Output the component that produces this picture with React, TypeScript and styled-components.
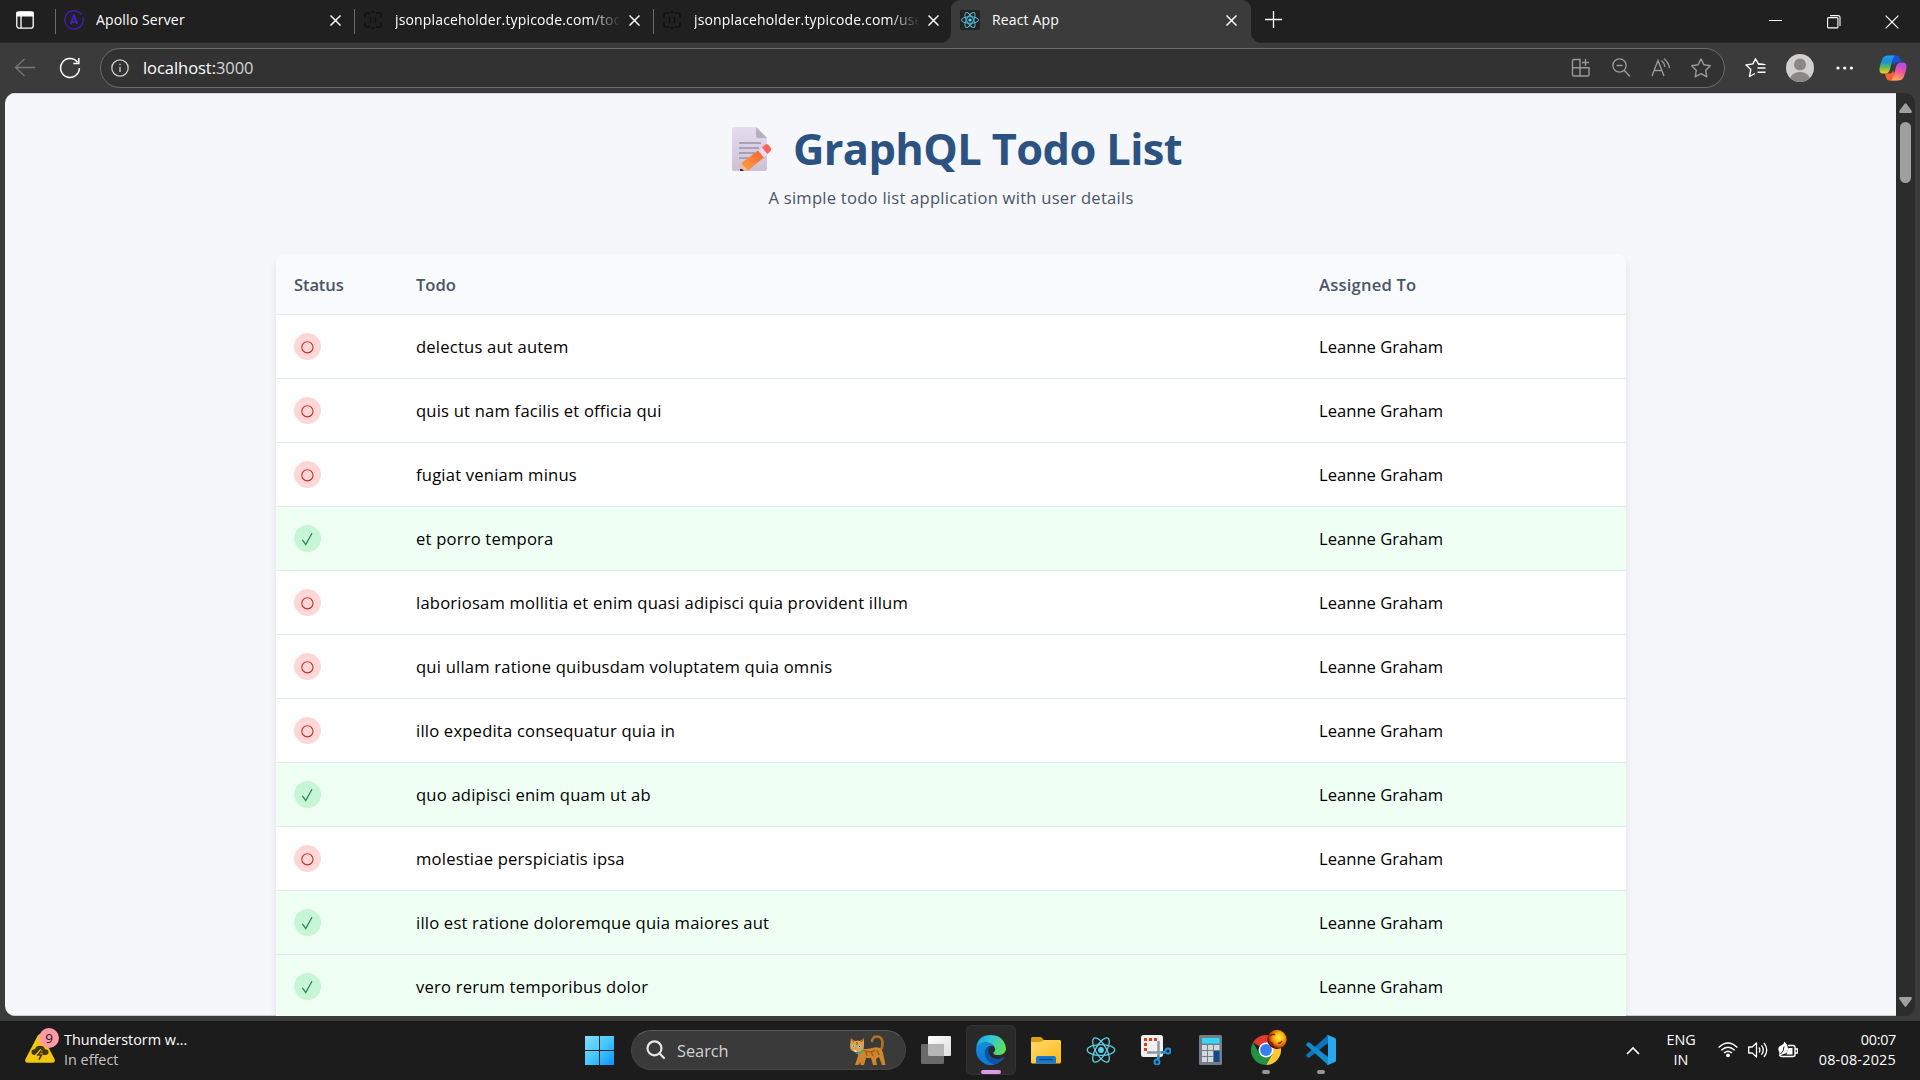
import React from 'react';
import styled, { createGlobalStyle, css } from 'styled-components';

const Global = createGlobalStyle`
  *, *::before, *::after { box-sizing: border-box; }
  html, body { margin: 0; padding: 0; background: #1c1c1c; overflow: hidden; }
  body { font-family: "Open Sans", "Noto Sans", sans-serif; }
  svg { display: block; flex: none; }
`;

const Screen = styled.div`
  width: 1920px;
  height: 1080px;
  display: flex;
  flex-direction: column;
  overflow: hidden;
  background: #3b3b3b;
`;

/* ---------- tab strip ---------- */
const TitleBar = styled.header`
  height: 43px;
  flex: none;
  display: flex;
  align-items: stretch;
  background: #202020;
  box-shadow: inset 0 -1px 0 #2b2b2b;
  color: #fff;
`;
const WorkspaceButton = styled.div`
  width: 55px;
  padding: 11px 0 0 16px;
`;
const Tab = styled.div<{ $active?: boolean }>`
  position: relative;
  width: 299px;
  display: flex;
  align-items: center;
  padding: 0 0 3px 9px;
  font-size: 14px;
  letter-spacing: 0.15px;
  ${(p) =>
    p.$active
      ? css`
          width: 300px;
          margin-left: -1px;
          background: #3b3b3b;
          border-radius: 9px 9px 0 0;
          &::before,
          &::after {
            content: '';
            position: absolute;
            bottom: 0;
            width: 10px;
            height: 10px;
          }
          &::before {
            left: -10px;
            background: radial-gradient(circle at 0 0, #202020 9.5px, #3b3b3b 10px);
          }
          &::after {
            right: -10px;
            background: radial-gradient(circle at 100% 0, #202020 9.5px, #3b3b3b 10px);
          }
        `
      : css`
          &::before {
            content: '';
            position: absolute;
            left: 0;
            top: 9px;
            width: 1px;
            height: 25px;
            background: #6b6b6b;
          }
        `}
`;
const TabTitle = styled.span<{ $fade?: boolean }>`
  width: 225px;
  margin-left: 12px;
  line-height: 20px;
  white-space: nowrap;
  overflow: hidden;
  ${(p) => p.$fade && css`mask-image: linear-gradient(90deg, #000 195px, transparent 226px);`}
`;
const TabClose = styled.span`
  margin: 1px 0 0 9px;
`;
const NewTab = styled.div`
  padding: 11px 0 0 14px;
  flex: 1;
`;
const WindowControls = styled.div`
  display: flex;
  gap: 44px;
  padding: 15px 21px 0 0;
`;

/* ---------- toolbar ---------- */
const Toolbar = styled.div`
  height: 50px;
  flex: none;
  display: flex;
  align-items: center;
  padding: 0 13px 0 14px;
  background: #3b3b3b;
`;
const NavButton = styled.div`
  width: 22px;
  margin-right: 23px;
`;
const AddressBar = styled.div`
  width: 1625px;
  height: 40px;
  margin-left: -4px;
  display: flex;
  align-items: center;
  padding: 0 12px 0 10px;
  border: 1px solid #6c6c6c;
  border-radius: 20px;
  background: #323232;
`;
const Url = styled.span`
  flex: 1;
  margin-left: 14px;
  font-size: 16.5px;
  letter-spacing: -0.05px;
  line-height: 24px;
  color: #fff;
`;
const Port = styled.span`
  color: #d5d5d5;
`;
const AddressActions = styled.div`
  display: flex;
  gap: 18px;
`;
const ToolbarActions = styled.div`
  flex: 1;
  display: flex;
  align-items: center;
  padding-left: 20px;
`;
const ToolbarItem = styled.div<{ $gap: number }>`
  margin-right: ${(p) => p.$gap}px;
`;

/* ---------- page ---------- */
const Viewport = styled.div`
  height: 923px;
  flex: none;
  margin: 0 5px;
  display: flex;
  overflow: hidden;
  border-radius: 10px;
  background: #2c2c2c;
`;
const Page = styled.main`
  width: 1891px;
  background: #f5f7fb;
  overflow: hidden;
  box-shadow: inset 0 1px 0 #dcdde1, inset 0 -1px 0 #cfd0d4;
`;
const PageHeader = styled.div`
  height: 161px;
  display: flex;
  flex-direction: column;
  align-items: center;
  padding: 26px 0 0 13px;
`;
const Title = styled.h1`
  display: flex;
  align-items: center;
  gap: 21px;
  height: 60px;
  margin: 0;
  font-size: 43.4px;
  font-weight: 700;
  letter-spacing: -0.6px;
  line-height: 60px;
  color: #2c5282;
`;
const Subtitle = styled.p`
  margin: 6px 0 0;
  padding-right: 12px;
  font-size: 16.6px;
  letter-spacing: 0.24px;
  line-height: 26px;
  color: #4a5568;
`;
const Card = styled.section`
  border-radius: 9px 9px 0 0;
  overflow: hidden;
  background: #fff;
`;
const CardShadow = styled.div`
  width: 1350px;
  height: 900px;
  border-radius: 9px;
  box-shadow: 0 4px 7px rgba(0, 0, 0, 0.1);
  margin-left: 271px;
`;
const Row = styled.div<{ $head?: boolean; $done?: boolean }>`
  display: grid;
  grid-template-columns: 122px 903px 1fr;
  align-items: center;
  height: ${(p) => (p.$head ? 61 : 64)}px;
  padding-left: 18px;
  padding-top: ${(p) => (p.$head ? 2 : 0)}px;
  border-bottom: 1px solid #e2e8f0;
  background: ${(p) => (p.$head ? '#f8fafc' : p.$done ? '#f0fff4' : '#fff')};
  font-size: 16.6px;
  font-weight: ${(p) => (p.$head ? 600 : 400)};
  color: ${(p) => (p.$head ? '#4a5568' : '#000')};
`;
const Cell = styled.span<{ $ls?: number }>`
  line-height: 26px;
  white-space: nowrap;
  letter-spacing: ${(p) => p.$ls ?? 0}px;
`;
const StatusBadge = styled.span<{ $done: boolean }>`
  width: 27px;
  height: 27px;
  border-radius: 50%;
  background: ${(p) => (p.$done ? '#c6f6d5' : '#fed7d7')};
  color: ${(p) => (p.$done ? '#2f855a' : '#c53030')};
`;
const ScrollTrack = styled.div`
  flex: 1;
  display: flex;
  flex-direction: column;
  align-items: center;
  padding: 10px 0 9px;
`;
const ScrollThumb = styled.div`
  width: 11px;
  height: 61px;
  margin: 9px 0 auto;
  border-radius: 6px;
  background: #9f9f9f;
`;

/* ---------- taskbar ---------- */
const Taskbar = styled.footer`
  height: 59px;
  margin-top: 5px;
  flex: none;
  display: flex;
  align-items: flex-start;
  padding-top: 4px;
  background: #1c1c1c;
  color: #fff;
`;
const Weather = styled.div`
  width: 574px;
  display: flex;
  padding-left: 25px;
`;
const WeatherIcon = styled.div`
  position: relative;
  width: 30px;
  margin-right: 9px;
  padding-top: 9px;
`;
const AlertCount = styled.span`
  position: absolute;
  left: 14px;
  top: 3px;
  width: 20px;
  height: 20px;
  border-radius: 50%;
  background: #ff99a4;
  color: #1a1a1a;
  font-size: 13.500px;
  line-height: 20px;
  text-align: center;
`;
const SmallText = styled.div<{ $align?: string; $ls?: number; $muted?: boolean }>`
  font-size: 14.4px;
  line-height: 20px;
  white-space: nowrap;
  text-align: ${(p) => p.$align ?? 'left'};
  letter-spacing: ${(p) => p.$ls ?? 0}px;
  color: ${(p) => (p.$muted ? '#c4c4c4' : '#fff')};
`;
const Stack = styled.div<{ $w?: number; $mr?: number }>`
  display: flex;
  flex-direction: column;
  width: ${(p) => (p.$w ? p.$w + 'px' : 'auto')};
  margin-right: ${(p) => p.$mr ?? 0}px;
  padding-top: 5px;
`;
const Apps = styled.div`
  display: flex;
  align-items: center;
  gap: 5px;
  height: 50px;
`;
const Slot = styled.div<{ $current?: boolean; $running?: boolean }>`
  position: relative;
  width: 50px;
  height: 50px;
  display: grid;
  place-items: center;
  border-radius: 6px;
  ${(p) => p.$current && css`background: #292929; box-shadow: inset 0 0 0 1px #333;`}
  &::after {
    content: '';
    display: ${(p) => (p.$current || p.$running ? 'block' : 'none')};
    position: absolute;
    bottom: 1px;
    left: ${(p) => (p.$current ? 15 : 21)}px;
    width: ${(p) => (p.$current ? 20 : 8)}px;
    height: 4px;
    border-radius: 2px;
    background: ${(p) => (p.$current ? '#dc9be4' : '#969696')};
  }
`;
const SearchPill = styled.div`
  width: 275px;
  height: 40px;
  margin-left: 2px;
  display: flex;
  align-items: center;
  padding: 0 18px 0 14px;
  border: 1px solid #454545;
  border-top-color: #5b5b5b;
  border-radius: 20px;
  background: #3a3a3a;
  color: #d2d2d2;
  font-size: 16.4px;
  letter-spacing: -0.05px;
`;
const SearchLabel = styled.span`
  flex: 1;
  margin: 1px 0 0 11px;
  line-height: 24px;
`;
const Tray = styled.div`
  margin-left: auto;
  display: flex;
  padding-right: 24px;
`;
const TrayIcon = styled.div<{ $w: number; $mr: number }>`
  width: ${(p) => p.$w}px;
  height: 50px;
  margin-right: ${(p) => p.$mr}px;
  display: grid;
  place-items: center;
`;

/* ---------- drawings ---------- */
const Cross = ({ s = 11, w = 1.5 }: { s?: number; w?: number }) => (
  <svg width={s} height={s} viewBox="0 0 11 11" stroke="#fff" strokeWidth={w}><path d="M.5.5l10 10M10.5.5l-10 10" /></svg>
);
const ReactAtom = ({ s, c = '#61dafb', w = 1.2 }: { s: number; c?: string; w?: number }) => (
  <svg width={s} height={s} viewBox="-14 -14 28 28" fill="none" stroke={c} strokeWidth={w}>
    <circle r="2.7" fill={c} stroke="none" />
    <ellipse rx="12.8" ry="5" /><ellipse rx="12.8" ry="5" transform="rotate(60)" /><ellipse rx="12.8" ry="5" transform="rotate(120)" />
  </svg>
);
const ApolloMark = () => (
  <svg width="20" height="20" viewBox="0 0 20 20" fill="none" stroke="#3f20ba">
    <path d="M16.7 3.6A9.2 9.2 0 1 0 18.7 7" strokeWidth="1.3" /><circle cx="17" cy="3.8" r="1" fill="#3f20ba" stroke="none" />
    <path d="M6.6 14 10 5.7l3.4 8.3M7.8 12h3.6" strokeWidth="2" />
  </svg>
);
const BracesMark = () => (
  <svg width="20" height="20" viewBox="0 0 20 20" fill="none" stroke="#111" strokeWidth="1.5">
    <path d="M2 8V5q0-2 2-2h3M13 3h3q2 0 2 2v3M2 12v3q0 2 2 2h3M13 17h3q2 0 2-2v-3M8.5 2h3M8.5 18h3" /><path d="M7.5 7v6M12.5 7v6" />
  </svg>
);
const ReactTabIcon = () => (
  <svg width="20" height="20" viewBox="-10 -10 20 20" fill="none" stroke="#53bcd8" strokeWidth="1">
    <rect x="-10" y="-10" width="20" height="20" rx="2" fill="#222" stroke="none" />
    <circle r="1.6" fill="#61dafb" stroke="none" />
    <ellipse rx="8.5" ry="3.3" /><ellipse rx="8.5" ry="3.3" transform="rotate(60)" /><ellipse rx="8.5" ry="3.3" transform="rotate(120)" />
  </svg>
);
const MemoIcon = () => (
  <svg width="40" height="44" viewBox="0 0 40 44">
    <defs>
      <linearGradient id="paper" x1="0" y1="0" x2="0" y2="1"><stop stopColor="#e4dded" /><stop offset="1" stopColor="#cdc0d6" /></linearGradient>
      <linearGradient id="pencil" x1="0" y1="1" x2="1" y2="0"><stop stopColor="#ffa248" /><stop offset="1" stopColor="#f3602c" /></linearGradient>
    </defs>
    <path d="M2 0h22l11 11v31q0 2-2 2H2q-2 0-2-2V2q0-2 2-2z" fill="url(#paper)" />
    <path d="M24 0l11 11h-9q-2 0-2-2z" fill="#b9aec1" />
    <path d="M7 16h22M7 21h20M7 26h16M7 31h9" stroke="#9a93a3" strokeWidth="1.6" />
    <path d="M8 44v-3l1.5-5L28 22l6 7-18 14.5z" fill="url(#pencil)" />
    <path d="M9.5 36.5l6.500 7H8v-3z" fill="#eac0a2" /><path d="M8 42h2l2 2H8z" fill="#352050" />
    <path d="M26 23.5l4-3 6 7-4 3z" fill="#e8d9f4" />
    <path d="M30 20.5l3.5-3q1.500-1 3 .6l2.500 3q1 1.800-.5 3l-3 2.900z" fill="#ff6257" />
  </svg>
);
const Copilot = () => (
  <svg width="28" height="26" viewBox="0 0 28 26">
    <defs>
      <linearGradient id="cpA" x1="0" y1="0" x2="0" y2="1"><stop stopColor="#1b9df0" /><stop offset=".35" stopColor="#1c8fd8" /><stop offset=".65" stopColor="#5cba61" /><stop offset="1" stopColor="#ffd20a" /></linearGradient>
      <linearGradient id="cpB" x1=".7" y1="0" x2=".4" y2="1"><stop stopColor="#a54cf0" /><stop offset=".5" stopColor="#f0559a" /><stop offset="1" stopColor="#ffae55" /></linearGradient>
    </defs>
    <path d="M10 .5h8q2 0 3 3L22 7h-4q-2 0-3 3z" fill="#1a4fdc" />
    <path d="M18 25.5h-8q-2 0-3-3L6 18.5h5q2 0 3-3z" fill="#f9603a" />
    <path d="M9 .5h7.5q-2 .5-3 4L11 14q-1 4.500-5 4.500H4Q0 18.500.5 13.500 1 9 3.5 3.500 5 .5 9 .5z" fill="url(#cpA)" />
    <path d="M19 25.5h-7.500q2-.5 3-4L17 12q1-4.500 5-4.500h2q4 0 3.500 5-.5 4.500-3 10-1.500 3-5.500 3z" fill="url(#cpB)" />
  </svg>
);
const WindowsLogo = () => (
  <svg width="29" height="29" viewBox="0 0 29 29">
    <defs><linearGradient id="win" gradientUnits="userSpaceOnUse" x1="0" y1="0" x2="29" y2="29"><stop stopColor="#85dcff" /><stop offset=".5" stopColor="#45c8fd" /><stop offset="1" stopColor="#0b93fb" /></linearGradient></defs>
    <path d="M0 0h14v14H0zM15 0h14v14H15zM0 15h14v14H0zM15 15h14v14H15z" fill="url(#win)" />
  </svg>
);
const Cat = () => (
  <svg width="38" height="32" viewBox="0 0 38 32">
    <path d="M31 17q3-4 2.500-9-1-6-6-5.500-4 .5-4.500 4.500" fill="none" stroke="#b8701e" strokeWidth="2.600" strokeLinecap="round" />
    <path d="M10 14q8 2 15-.5 7-1 9 5l2.500 12.500H33l-3-8-3 2 1 6h-4l-2-7h-5l-2 7h-3.500v-3L9.500 31H6l3-9q-1-4 1-8z" fill="#ce852c" />
    <path d="M14 16q8 4 12 0M17 18l1 4M22 18l2 4M28 16l2 5" fill="none" stroke="#9c5717" strokeWidth="1.2" />
    <path d="M2 4l4 3q3-1 5 0l4-3v8q0 6-7 6t-7-6z" fill="#dda04a" />
    <path d="M2 4l3 4M15 4l-3 4M8 8v3" stroke="#9c5717" strokeWidth="1.2" />
    <circle cx="4.5" cy="12" r="1.5" fill="#9be5ec" /><circle cx="10.5" cy="12.5" r="1.5" fill="#8ae0e8" /><circle cx="4.5" cy="12" r=".6" /><circle cx="10.5" cy="12.5" r=".6" />
    <path d="M5 16l3 1-1.5 1.5z" fill="#fff" /><path d="M7 19q5 1 7-3" fill="none" stroke="#28a89a" strokeWidth="1.6" />
  </svg>
);
const TaskView = () => (
  <svg width="30" height="28" viewBox="0 0 30 28">
    <defs><linearGradient id="tv" x2="1" y2="1"><stop stopColor="#fff" /><stop offset="1" stopColor="#dedede" /></linearGradient></defs>
    <rect x="7" width="23" height="20" rx="1" fill="url(#tv)" /><rect y="8" width="23" height="20" rx="1" fill="#6a6a6a" /><path d="M7 8h16v12H8q-1 0-1-1z" fill="#b5b5b5" />
  </svg>
);
const Edge = () => (
  <svg width="30" height="30" viewBox="0 0 30 30">
    <defs>
      <linearGradient id="edTop" x1="0" y1=".3" x2="1" y2=".6"><stop stopColor="#1ba2e6" /><stop offset=".45" stopColor="#32c6d8" /><stop offset="1" stopColor="#62e04e" /></linearGradient>
      <linearGradient id="edL" x1=".2" y1="0" x2=".5" y2="1"><stop stopColor="#168fd8" /><stop offset="1" stopColor="#0b79dc" /></linearGradient>
      <linearGradient id="edB" x1="0" y1="0" x2="1" y2="1"><stop stopColor="#0f4f9d" /><stop offset="1" stopColor="#1456aa" /></linearGradient>
    </defs>
    <path d="M.3 13Q1.5 0 15 0 24 0 28 7q3 5.5 1.5 9-2 4.5-7.500 4-5 0-4.500-2.500 2-1.500 1.500-4Q17.500 8.500 11 7.500 4 7 .3 13z" fill="url(#edTop)" />
    <path d="M0 15Q.5 8 8 7.5q7-.5 10 3.500-7-1.500-8 5-.5 8 6 11.500 3 1.500 3 1.800Q12 32 5.500 26.500 0 22 0 15z" fill="url(#edL)" />
    <path d="M12.500 11.500q-4 2-3.800 6.500.3 6.500 6 10 5 3 10-1.500 2.500-2 3.300-3.800-.5-.7-1.500 0Q17 26.500 13 18.500q-1.500-4 1.500-6.500z" fill="url(#edB)" />
  </svg>
);
const Folder = () => (
  <svg width="30" height="27" viewBox="0 0 30 27">
    <defs><linearGradient id="fd" x2="1" y2="1"><stop stopColor="#ffdb70" /><stop offset="1" stopColor="#ffb914" /></linearGradient></defs>
    <path d="M1.5 0H10l3 3h15q2 0 2 2v4H0V1.500Q0 0 1.500 0z" fill="#dda00c" />
    <path d="M0 5h10l3-2h15.500Q30 3 30 5v20q0 1.500-1.500 1.500h-27Q0 26.500 0 25z" fill="url(#fd)" />
    <path d="M5 26.500V21q0-2 2-2h16q2 0 2 2v5.500z" fill="#1678cf" /><path d="M9 22.500h12" stroke="#0a4a94" strokeWidth="1.3" strokeLinecap="round" />
  </svg>
);
const Snip = () => (
  <svg width="30" height="30" viewBox="0 0 30 30" fill="none">
    <rect width="22" height="22" rx="2.5" fill="#f0f0f0" />
    <path d="M16 4.500H4.500V17" stroke="#dc3c10" strokeWidth="3" strokeDasharray="3 2" />
    <path d="M17.500 6v18M6 17.500h18" stroke="#8e979f" strokeWidth="2.5" />
    <circle cx="27" cy="16" r="2.5" stroke="#1c94e0" strokeWidth="2" /><circle cx="16" cy="27" r="2.5" stroke="#1c94e0" strokeWidth="2" />
    <path d="M20 17.500l5-1M17.500 20l-1 5" stroke="#1c94e0" strokeWidth="2" />
  </svg>
);
const Calculator = () => (
  <svg width="24" height="30" viewBox="0 0 24 30">
    <rect width="23" height="30" rx="1.5" fill="#747e89" /><rect x="3" y="3" width="17.5" height="5.5" fill="#38d6fb" />
    <path d="M3 10h5v5H3zM9 10h5v5H9zM15 10h5.500v5H15zM3 16h5v5H3zM9 16h5v5H9zM3 22h5v5H3zM9 22h5v5H9z" fill="#d3d8df" /><path d="M15 16h5.500v11H15z" fill="#10498f" />
  </svg>
);
const Chrome = () => (
  <svg width="42" height="42" viewBox="-21 -21 42 42">
    <defs><radialGradient id="fire" cx=".6" cy=".4" r=".58"><stop stopColor="#fff04a" /><stop offset=".45" stopColor="#f9b010" /><stop offset=".8" stopColor="#cf5208" /><stop offset="1" stopColor="#541504" /></radialGradient></defs>
    <path d="M0 0L-13 -7.5A15 15 0 0 1 13 -7.5z" fill="#e33b2e" />
    <path d="M0 0L0 -7.5H13A15 15 0 0 1 0 15L6.500 3.700z" fill="#fcc934" />
    <path d="M-6.500 3.700L-13 -7.5A15 15 0 0 0 0 15L6.500 3.700z" fill="#229342" />
    <circle r="7.5" fill="#fff" /><circle r="5.9" fill="#377ff0" />
    <circle cx="11" cy="-10.5" r="9.7" fill="url(#fire)" />
    <path d="M3 -8q3 0 4 3t4 2M4 -14q3-3 5-1M12 -7q2 1 4-2" stroke="#7d1c05" strokeWidth="1.3" fill="none" />
  </svg>
);
const VsCode = () => (
  <svg width="30" height="30" viewBox="0 0 30 30">
    <path d="M22 0v8L3.500 22.500q-.8.6-1.600 0L.5 21.200q-.8-.9 0-1.700z" fill="#0a75bd" />
    <path d="M22 30v-8L3.500 7.500q-.8-.6-1.600 0L.5 8.800q-.8.9 0 1.700z" fill="#128acb" />
    <path d="M22 0l7 3q1 .6 1 1.500v21q0 1-1 1.500l-7 3q-.8.2-1.500-.5 1.500.5 1.500-1.500V2q0-2-1.500-1.500.7-.7 1.500-.5z" fill="#29a8f2" />
  </svg>
);

const StatusGlyph = ({ done }: { done: boolean }) => (
  <svg width="27" height="27" viewBox="0 0 27 27" fill="none" stroke="currentColor">
    {done ? <path d="M8.3 14.8l3.500 4.700L18 8.200" strokeWidth="1.3" /> : <circle cx="13.4" cy="14.3" r="5.6" strokeWidth="1.1" />}
  </svg>
);

const todos: { title: string; done: boolean }[] = [
  { title: 'delectus aut autem', done: false },
  { title: 'quis ut nam facilis et officia qui', done: false },
  { title: 'fugiat veniam minus', done: false },
  { title: 'et porro tempora', done: true },
  { title: 'laboriosam mollitia et enim quasi adipisci quia provident illum', done: false },
  { title: 'qui ullam ratione quibusdam voluptatem quia omnis', done: false },
  { title: 'illo expedita consequatur quia in', done: false },
  { title: 'quo adipisci enim quam ut ab', done: true },
  { title: 'molestiae perspiciatis ipsa', done: false },
  { title: 'illo est ratione doloremque quia maiores aut', done: true },
  { title: 'vero rerum temporibus dolor', done: true },
];

const tabs = [
  { title: 'Apollo Server', icon: <ApolloMark /> },
  { title: 'jsonplaceholder.typicode.com/todos', icon: <BracesMark />, fade: true },
  { title: 'jsonplaceholder.typicode.com/users', icon: <BracesMark />, fade: true },
  { title: 'React App', icon: <ReactTabIcon />, active: true },
];

export default function App() {
  return (
    <Screen>
      <Global />
      <TitleBar>
        <WorkspaceButton>
          <svg width="18" height="18" viewBox="0 0 18 18" fill="none" stroke="#fff" strokeWidth="1.3"><rect x=".8" y=".8" width="16.4" height="16.4" rx="2.5" /><path d="M1 1.500h16v3.300H1z" fill="#fff" /><path d="M5 5v12" /></svg>
        </WorkspaceButton>
        {tabs.map((t, i) => (
          <Tab key={i} $active={t.active}>
            {t.icon}
            <TabTitle $fade={t.fade}>{t.title}</TabTitle>
            <TabClose><Cross /></TabClose>
          </Tab>
        ))}
        <NewTab><svg width="17" height="17" viewBox="0 0 17 17" stroke="#fff" strokeWidth="1.3"><path d="M8.500 0v17M0 8.500h17" /></svg></NewTab>
        <WindowControls>
          <svg width="14" height="14" viewBox="0 0 14 14" stroke="#fff"><path d="M0 5.500h13" /></svg>
          <svg width="14" height="14" viewBox="0 0 14 14" fill="none" stroke="#fff" strokeWidth="1.1"><rect x=".6" y="2.6" width="10.3" height="10.3" rx="1" /><path d="M3 .6h8q2 0 2 2V11" /></svg>
          <Cross s={14} w={1} />
        </WindowControls>
      </TitleBar>

      <Toolbar>
        <NavButton><svg width="22" height="22" viewBox="0 0 22 22" fill="none" stroke="#777" strokeWidth="1.3"><path d="M21 10.500H1.500M10.500 2L1.500 10.500l9 8.500" /></svg></NavButton>
        <NavButton><svg width="22" height="22" viewBox="0 0 22 22" fill="none" stroke="#fff" strokeWidth="1.5"><path d="M20.400 11A9.400 9.400 0 1 1 18.500 5.300M19.800 1v5.500h-5.500" /></svg></NavButton>
        <AddressBar>
          <svg width="18" height="18" viewBox="0 0 18 18" fill="none" stroke="#d0d0d0" strokeWidth="1.3"><circle cx="9" cy="9" r="8.2" /><path d="M9 8v5M9 4.800v1.500" /></svg>
          <Url>localhost:<Port>3000</Port></Url>
          <AddressActions>
            <svg width="22" height="20" viewBox="0 0 22 20" fill="none" stroke="#999" strokeWidth="1.4"><path d="M2.500 10V3q0-1.500 1.500-1.500h6v16.500H4q-1.500 0-1.500-1.500V9.700h16.500v6.800q0 1.500-1.500 1.500H10M15.500 1v7M12 4.500h7" /></svg>
            <svg width="22" height="20" viewBox="0 0 22 20" fill="none" stroke="#999" strokeWidth="1.4"><circle cx="9.5" cy="7.5" r="6.6" /><path d="M14 12l6 6.500M6.500 7.500h6" /></svg>
            <svg width="22" height="20" viewBox="0 0 22 20" fill="none" stroke="#999" strokeWidth="1.4"><path d="M2 18L8 2.500 14 18M4 12.500h8M11.500 2.500q3 2.500 3.500 6.500M14 .8q5 4 5.500 9.500" /></svg>
            <svg width="22" height="20" viewBox="0 0 22 20" fill="none" stroke="#999" strokeWidth="1.4" strokeLinejoin="round"><path d="M11 .9l2.900 5.900 6.400.9-4.600 4.600 1.100 6.500L11 15.700l-5.800 3.100 1.100-6.500L1.700 7.700l6.400-.9z" /></svg>
          </AddressActions>
        </AddressBar>
        <ToolbarActions>
          <ToolbarItem $gap={20}>
            <svg width="21" height="20" viewBox="0 0 21 20" fill="none" stroke="#fff" strokeWidth="1.4" strokeLinejoin="round"><path d="M19 6.500l-5.800-.8L10.500.8 7.900 5.900 1 7l4.800 4.500-1.300 7 5.500-3M12.500 10H20.500M12.500 14.200H20.500" /><path d="M13 6.500h7.500" strokeWidth="1" /></svg>
          </ToolbarItem>
          <ToolbarItem $gap={22}>
            <svg width="28" height="28" viewBox="0 0 28 28"><defs><clipPath id="face"><circle cx="14" cy="14" r="14" /></clipPath></defs><g clipPath="url(#face)"><path d="M0 0h28v28H0z" fill="#d2d0ce" /><circle cx="14" cy="10.5" r="6" fill="#8a8886" /><ellipse cx="14" cy="26" rx="10" ry="8" fill="#8a8886" /></g></svg>
          </ToolbarItem>
          <ToolbarItem $gap={25}>
            <svg width="18" height="4" viewBox="0 0 18 4" fill="#fff"><circle cx="2" cy="2" r="1.6" /><circle cx="8.7" cy="2" r="1.6" /><circle cx="15.4" cy="2" r="1.6" /></svg>
          </ToolbarItem>
          <Copilot />
        </ToolbarActions>
      </Toolbar>

      <Viewport>
        <Page>
          <PageHeader>
            <Title><MemoIcon />GraphQL Todo List</Title>
            <Subtitle>A simple todo list application with user details</Subtitle>
          </PageHeader>
          <CardShadow>
            <Card>
              <Row $head><Cell $ls={-0.15}>Status</Cell><Cell>Todo</Cell><Cell $ls={0.2}>Assigned To</Cell></Row>
              {todos.map((t) => (
                <Row key={t.title} $done={t.done}>
                  <StatusBadge $done={t.done}><StatusGlyph done={t.done} /></StatusBadge>
                  <Cell $ls={0.2}>{t.title}</Cell>
                  <Cell>Leanne Graham</Cell>
                </Row>
              ))}
            </Card>
          </CardShadow>
        </Page>
        <ScrollTrack>
          <svg width="13" height="10" viewBox="0 0 13 10" fill="#9f9f9f"><path d="M5.500.8q1-1 2 0L12.700 8q.6 2-1 2H1.300q-1.600 0-1-2z" /></svg>
          <ScrollThumb />
          <svg width="13" height="10" viewBox="0 0 13 10" fill="#9f9f9f"><path d="M5.500 9.200q1 1 2 0L12.700 2q.6-2-1-2H1.300Q-.3 0 .3 2z" /></svg>
        </ScrollTrack>
      </Viewport>

      <Taskbar>
        <Weather>
          <WeatherIcon>
            <svg width="30" height="29" viewBox="0 0 30 29"><path d="M12.800 1.500q2.200-3 4.400 0L29.500 25q1.300 3.500-2 3.800h-25Q-.8 28.500.5 25z" fill="#f2c80f" /><path d="M9.500 21q-3 0-3-3t3.500-2.800q1-3.400 5-3.400t5 3.400q3.500 0 3.500 2.800t-3 3z" fill="#44360b" /><path d="M16.500 16l-4.500 5h4l-2 5" fill="none" stroke="#f2c80f" strokeWidth="3" /><path d="M16.500 16.500L13 21h3.500l-2.500 4.500" fill="none" stroke="#44360b" strokeWidth="1.6" /></svg>
            <AlertCount>9</AlertCount>
          </WeatherIcon>
          <Stack>
            <SmallText>Thunderstorm w...</SmallText>
            <SmallText $muted>In effect</SmallText>
          </Stack>
        </Weather>
        <Apps>
          <Slot><WindowsLogo /></Slot>
          <SearchPill>
            <svg width="20" height="20" viewBox="0 0 20 20" fill="none" stroke="#e4e6e8" strokeWidth="2.2" strokeLinecap="round"><circle cx="8.5" cy="8.3" r="7" /><path d="M13.600 13.500l4.400 4.500" /></svg>
            <SearchLabel>Search</SearchLabel>
            <Cat />
          </SearchPill>
          <Slot><TaskView /></Slot>
          <Slot $current><Edge /></Slot>
          <Slot><Folder /></Slot>
          <Slot><ReactAtom s={30} c="#5fcfe3" /></Slot>
          <Slot><Snip /></Slot>
          <Slot><Calculator /></Slot>
          <Slot $running><Chrome /></Slot>
          <Slot $running><VsCode /></Slot>
        </Apps>
        <Tray>
          <TrayIcon $w={14} $mr={26}><svg width="14" height="9" viewBox="0 0 14 9" fill="none" stroke="#fff" strokeWidth="1.7"><path d="M1 8l6-6 6 6" /></svg></TrayIcon>
          <Stack $w={30} $mr={22}><SmallText $align="center" $ls={-0.1}>ENG</SmallText><SmallText $align="center">IN</SmallText></Stack>
          <TrayIcon $w={20} $mr={10}>
            <svg width="20" height="16" viewBox="0 0 20 16" fill="none" stroke="#fff" strokeWidth="1.4"><path d="M.6 5.500q9.400-9 18.800 0M3.300 8.300q6.700-6.300 13.400 0M6 11q4-3.700 8 0" /><circle cx="10" cy="13.3" r="1.9" fill="#fff" stroke="none" /></svg>
          </TrayIcon>
          <TrayIcon $w={20} $mr={10}>
            <svg width="20" height="18" viewBox="0 0 20 18" fill="none" stroke="#fff" strokeWidth="1.3" strokeLinejoin="round"><path d="M.7 6h3.500L8.500 2v14L4.200 12H.7zM11 6.500q1.800 2.500 0 5M13.500 4.300q3.500 4.700 0 9.400M16 2q5.500 7 0 14" /></svg>
          </TrayIcon>
          <TrayIcon $w={20} $mr={18}>
            <svg width="20" height="18" viewBox="0 0 20 18" fill="none" stroke="#fff" strokeWidth="1.4"><path d="M10 4.500h5q2 0 2 2v7q0 2-2 2H4q-2 0-2-1.500M17 8h2.500v4H17" /><path d="M8.500 13.500h6V7h-4z" fill="#fff" stroke="none" /><path d="M6.500.5q4 4 3.500 8-.5 4-4.500 4.500L1 15l.5-3Q-1.500 6 3 4.500 6 3.500 6.500.5z" fill="#fff" stroke="none" /><path d="M6 5.500q0 5-3.500 7.500" stroke="#1c1c1c" strokeWidth="1" /></svg>
          </TrayIcon>
          <Stack $w={80}><SmallText $align="right" $ls={-0.3}>00:07</SmallText><SmallText $align="right" $ls={0.22}>08-08-2025</SmallText></Stack>
        </Tray>
      </Taskbar>
    </Screen>
  );
}
